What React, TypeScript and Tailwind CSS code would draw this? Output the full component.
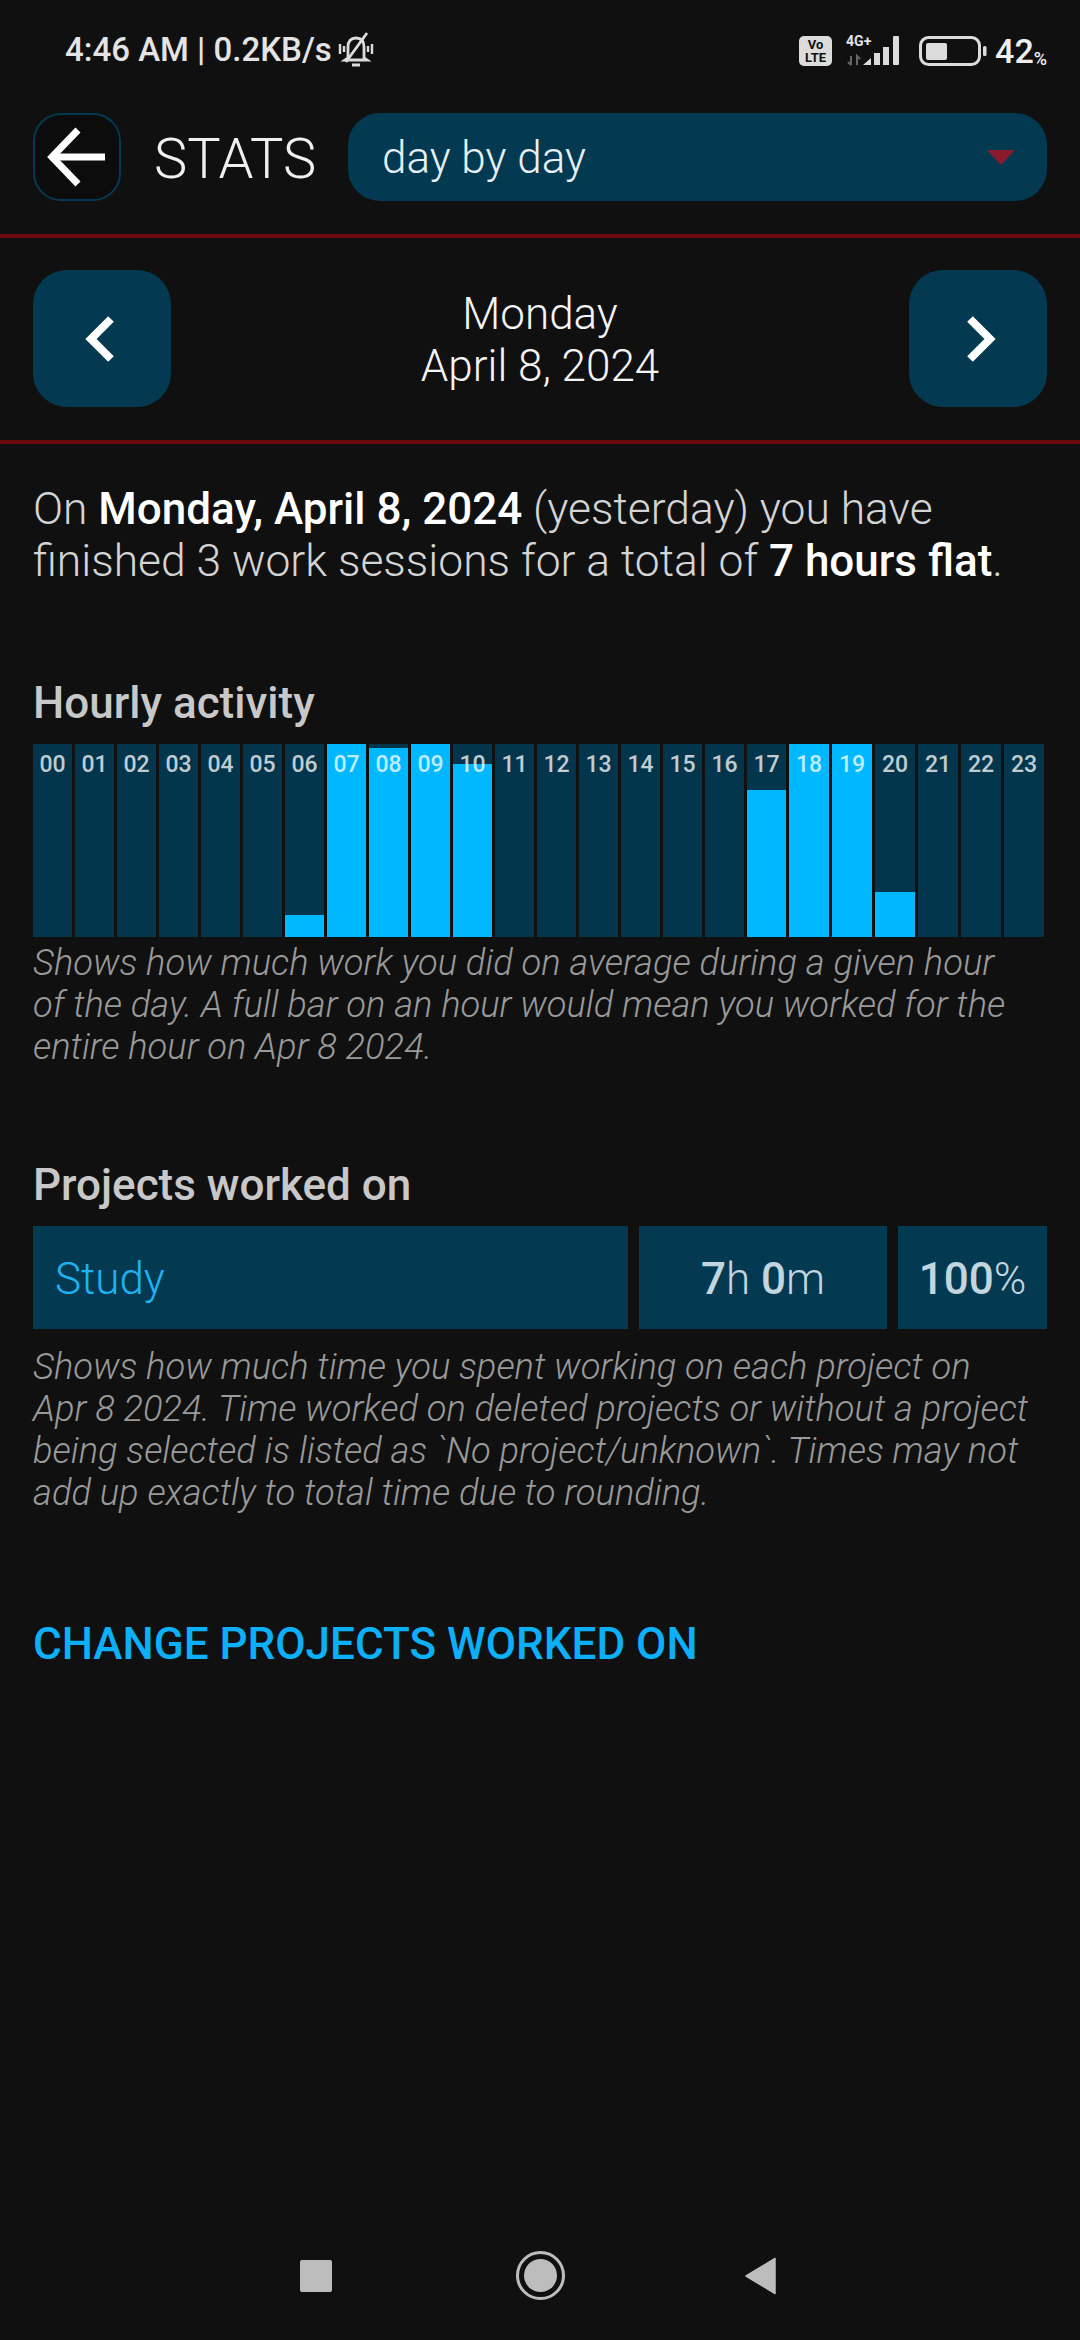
import React from "react";

const hours = [
  0, 0, 0, 0, 0, 0, 22, 193, 189, 193, 173, 0, 0, 0, 0, 0, 0, 147, 193, 193, 45, 0, 0, 0,
];

function BackArrow() {
  return (
    <svg width="60" height="60" viewBox="0 0 60 60" fill="none" stroke="white" strokeWidth="7">
      <path d="M58 30H6" />
      <path d="M31 3L5 30L31 57" />
    </svg>
  );
}

function Chevron({ flip }: { flip?: boolean }) {
  return (
    <svg
      width="30"
      height="46"
      viewBox="0 0 30 46"
      fill="none"
      stroke="white"
      strokeWidth="8"
      className={flip ? "rotate-180" : ""}
    >
      <path d="M26 3L6 23L26 43" />
    </svg>
  );
}

function StatusBar() {
  return (
    <div className="flex h-[113px] items-start justify-between pl-[65px] pr-[33px] pt-[31px] text-[#e4e4e4]">
      <div className="flex items-center text-[33px] leading-[38px] font-medium">
        <span>4:46 AM | 0.2KB/s</span>
        <svg width="36" height="36" viewBox="0 0 36 36" fill="none" stroke="#dcdcdc" strokeWidth="2.8" className="ml-[6px]">
          <path d="M10 26V15C10 9 13 6 18 6C23 6 26 9 26 15V26L29 28H7L10 26Z" />
          <path d="M14 33H22" strokeWidth="3" />
          <path d="M29 1L8 30" />
          <path d="M2 12V22M6 14V20M34 12V22M30 14V20" strokeWidth="2.4" />
        </svg>
      </div>
      <div className="flex items-center pt-[3px]">
        <div className="flex h-[30px] w-[33px] flex-col items-center justify-center rounded-[5px] bg-[#dcdcdc] text-[13px] leading-[13px] font-bold text-[#101010]">
          <span>Vo</span>
          <span>LTE</span>
        </div>
        <div className="relative ml-[14px] h-[30px] w-[57px]">
          <span className="absolute left-0 top-[-3px] text-[14px] leading-[16px] font-bold text-[#e4e4e4]">4G+</span>
          <svg width="57" height="30" viewBox="0 0 57 30" className="absolute left-0 top-0">
            <path d="M5 20V29M2 26L5 29M11 29V20L14 23" stroke="#666" strokeWidth="2" fill="none" />
            <path d="M17 29L25 22V29Z" fill="#dcdcdc" />
            <rect x="28" y="17" width="6" height="12" fill="#dcdcdc" />
            <rect x="37" y="11" width="6" height="18" fill="#dcdcdc" />
            <rect x="47" y="0" width="6" height="29" rx="1" fill="#dcdcdc" />
          </svg>
        </div>
        <svg width="68" height="31" viewBox="0 0 68 31" className="ml-[16px]">
          <rect x="1.5" y="1.5" width="59" height="27" rx="8" fill="none" stroke="#dcdcdc" strokeWidth="3" />
          <rect x="7" y="7" width="21" height="17" rx="2" fill="#dcdcdc" />
          <rect x="64" y="10" width="3.5" height="10" rx="1.5" fill="#dcdcdc" />
        </svg>
        <span className="ml-[8px] text-[34px] leading-[34px] font-medium text-[#eeeeee]">42</span>
        <span className="self-end text-[18px] leading-[18px] font-medium text-[#eeeeee]">%</span>
      </div>
    </div>
  );
}

function NavBar() {
  return (
    <div className="mt-auto mb-[40px] flex items-center pl-[300px]">
      <div className="h-[32px] w-[32px] rounded-[2px] bg-[#bdbdbd]" />
      <div className="ml-[184px] flex h-[49px] w-[49px] items-center justify-center rounded-full border-[3px] border-[#bdbdbd]">
        <div className="h-[33px] w-[33px] rounded-full bg-[#bdbdbd]" />
      </div>
      <svg width="32" height="38" viewBox="0 0 32 38" className="ml-[180px]">
        <path d="M30 1.5V36.5L1 19Z" fill="#bdbdbd" stroke="#bdbdbd" strokeWidth="1.5" strokeLinejoin="round" />
      </svg>
    </div>
  );
}

export default function App() {
  return (
    <div className="flex h-[2340px] w-[1080px] flex-col overflow-hidden bg-[#101010] font-['Roboto',sans-serif] text-white">
      <StatusBar />

      <div className="flex items-center border-b-[4px] border-[#6b0a0e] px-[33px] pb-[33px]">
        <button className="flex h-[88px] w-[88px] items-center justify-center rounded-[28px] border-[2px] border-[#033a52] bg-[#0c0c0c]">
          <BackArrow />
        </button>
        <div className="ml-[33px] w-[194px] pt-[3px] text-[56px] leading-[60px] font-light text-[#f0f0f0]">STATS</div>
        <div className="relative flex h-[88px] flex-1 items-center rounded-[32px] bg-[#033a52] pl-[34px] pt-[2px] text-[44px] font-light text-[#e8f0f4]">
          day by day
          <div className="absolute right-[32px] top-[37px] h-0 w-0 border-x-[14px] border-t-[15px] border-x-transparent border-t-[#8c1a2e]" />
        </div>
      </div>

      <div className="flex items-center justify-between border-b-[4px] border-[#6b0a0e] px-[33px] pt-[32px] pb-[33px]">
        <button className="flex h-[137px] w-[138px] items-center justify-center rounded-[34px] bg-[#033a52] pr-[4px]">
          <Chevron />
        </button>
        <div className="pt-[3px] text-center text-[44px] leading-[52px] font-light text-[#f4f4f4]">
          <div>Monday</div>
          <div>April 8, 2024</div>
        </div>
        <button className="flex h-[137px] w-[138px] items-center justify-center rounded-[34px] bg-[#033a52] pl-[6px]">
          <Chevron flip />
        </button>
      </div>

      <p className="mt-[39px] px-[33px] text-[44.4px] leading-[52px] font-light text-[#d4d4d4]">
        On <span className="text-[44px] font-medium text-white">Monday, April 8, 2024</span> (yesterday) you have
        finished 3 work sessions for a total of <span className="text-[44px] font-medium text-white">7 hours flat</span>.
      </p>

      <h2 className="mt-[92px] px-[33px] text-[44px] leading-[48px] font-medium text-[#c8c8c8]">Hourly activity</h2>
      <div className="mt-[17px] grid h-[193px] grid-cols-[repeat(18,39px)_repeat(6,40px)] gap-x-[3px] pl-[33px]">
        {hours.map((h, i) => (
          <div key={i} className="relative bg-[#03364c]">
            <div className="absolute inset-x-0 bottom-0 bg-[#00b8ff]" style={{ height: h }} />
            <div className="absolute inset-x-0 top-[6px] text-center text-[23px] leading-[30px] font-medium text-white/75">
              {String(i).padStart(2, "0")}
            </div>
          </div>
        ))}
      </div>
      <p className="mt-[5px] px-[33px] text-[36.3px] leading-[42px] font-light text-[#9a9a9a] italic">
        Shows how much work you did on average during a given hour
        <br />
        of the day. A full bar on an hour would mean you worked for the
        <br />
        entire hour on Apr 8 2024.
      </p>

      <h2 className="mt-[93px] px-[33px] text-[44px] leading-[48px] font-medium text-[#c8c8c8]">Projects worked on</h2>
      <div className="mt-[17px] flex h-[103px] gap-x-[11px] px-[33px]">
        <div className="flex w-[595px] items-center bg-[#033a52] pl-[22px] pt-[2px] text-[44px] font-light text-[#1fb2f2]">Study</div>
        <div className="flex w-[248px] items-center justify-center bg-[#033a52] pt-[2px] text-[44px] font-light text-[#c3d5de]">
          <span className="font-medium">7</span>h&nbsp;<span className="font-medium">0</span>m
        </div>
        <div className="flex w-[149px] items-center justify-center bg-[#033a52] pt-[2px] text-[44px] font-light text-[#c3d5de]">
          <span className="font-medium">100</span>%
        </div>
      </div>
      <p className="mt-[17px] px-[33px] text-[36.3px] leading-[42px] font-light text-[#9a9a9a] italic">
        Shows how much time you spent working on each project on
        <br />
        Apr 8 2024. Time worked on deleted projects or without a project
        <br />
        being selected is listed as `No project/unknown`. Times may not
        <br />
        add up exactly to total time due to rounding.
      </p>

      <div className="mt-[105px] px-[33px] text-[44px] leading-[50px] font-medium text-[#0cb0f8]">CHANGE PROJECTS WORKED ON</div>

      <NavBar />
    </div>
  );
}
